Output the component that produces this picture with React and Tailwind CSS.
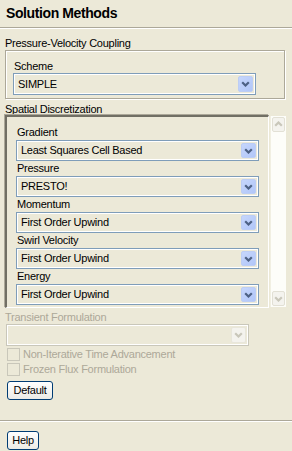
const font = { fontFamily: '"Liberation Sans", Arial, sans-serif', letterSpacing: "-0.25px" };

function Chevron({ color = "#4D6185" }) {
  return (
    <svg width="9" height="6" viewBox="0 0 9 6" className="block">
      <path d="M1.2 1.2 L4.5 4.5 L7.8 1.2" fill="none" stroke={color} strokeWidth="2.2" />
    </svg>
  );
}

function Select({ value, width, height = 21, disabled }) {
  return (
    <div
      className={`flex items-stretch border ${disabled ? "border-[#C9C7BA]" : "border-[#7F9DB9]"} shadow-[inset_0_0_0_1px_#fff]`}
      style={{ width, height }}
    >
      <div className="flex-1 flex items-center pl-[4px] text-[11px] text-black">{value}</div>
      <div className="p-[2px] pl-0">
        <div
          className={`w-[15px] h-full flex items-center justify-center rounded-[2px] border ${
            disabled
              ? "bg-[#F4F3EE] border-[#E8E6DB]"
              : "bg-gradient-to-br from-[#C6D6FC] to-[#B1C6F8] border-[#BCCDF5]"
          }`}
        >
          <Chevron color={disabled ? "#C9C7BA" : "#4D6185"} />
        </div>
      </div>
    </div>
  );
}

function XpButton({ children, width }) {
  return (
    <div
      className="h-[19px] flex items-center justify-center border border-[#003C74] rounded-[3px] bg-gradient-to-b from-white to-[#ECEBE6] text-[11px] text-black"
      style={{ width }}
    >
      {children}
    </div>
  );
}

function Checkbox({ label }) {
  return (
    <div className="flex items-center h-[15px] pl-[7px] gap-[3px]">
      <div className="w-[13px] h-[13px] border border-[#C9C7BA] bg-[#ECE9D8]" />
      <span className="text-[11px] text-[#ACA899]">{label}</span>
    </div>
  );
}

const fields = [
  ["Gradient", "Least Squares Cell Based"],
  ["Pressure", "PRESTO!"],
  ["Momentum", "First Order Upwind"],
  ["Swirl Velocity", "First Order Upwind"],
  ["Energy", "First Order Upwind"],
];

export default function App() {
  return (
    <div className="w-[292px] h-[451px] bg-[#ECE9D8] flex flex-col text-black overflow-hidden" style={font}>
      {/* Title */}
      <div className="h-[27px] flex items-end pb-[3px] pl-[6px] text-[14px] font-bold tracking-[-0.4px]">Solution Methods</div>
      <div className="h-[2px] border-t border-[#ACA899] bg-white" />

      <div className="pl-[5px] flex flex-col">
        {/* Pressure-Velocity Coupling */}
        <div className="h-[21px] pt-[7px] text-[11px] leading-[14px]">Pressure-Velocity Coupling</div>
        <div className="w-[280px] h-[49px] border border-[#ACA899] shadow-[inset_1px_1px_0_#fff,1px_1px_0_#fff] pl-[7px] pt-[8px] flex flex-col">
          <div className="h-[14px] text-[11px] leading-[14px] pl-[1px]">Scheme</div>
          <Select value="SIMPLE" width={243} height={22} />
        </div>

        {/* Spatial Discretization */}
        <div className="h-[16px] pt-[3px] text-[11px] leading-[14px]">Spatial Discretization</div>
        <div className="flex h-[193px]">
          <div className="w-[264px] h-[193px] border-t-2 border-l-2 border-t-[#716F64] border-l-[#716F64] border-b border-r border-b-white border-r-white shadow-[-1px_-1px_0_#ACA899] overflow-hidden pl-[9px] pt-[8px]">
            {fields.map(([label, value]) => (
              <div key={label} className="flex flex-col">
                <div className="h-[15px] text-[11px] leading-[15px] pl-[1px]">{label}</div>
                <Select value={value} width={243} />
              </div>
            ))}
          </div>
          <div className="ml-[1px] mt-[1px] w-[16px] h-[191px] bg-[#FDFDF9] border-l border-[#F1EFE2] flex flex-col justify-between p-[1px]">
            <div className="h-[15px] rounded-[2px] bg-[#F4F3EE] border border-[#E2E0D5] flex items-center justify-center rotate-180">
              <Chevron color="#C9C7BA" />
            </div>
            <div className="h-[15px] rounded-[2px] bg-[#F4F3EE] border border-[#E2E0D5] flex items-center justify-center">
              <Chevron color="#C9C7BA" />
            </div>
          </div>
        </div>

        {/* Transient Formulation */}
        <div className="h-[16px] pt-[2px] text-[11px] leading-[14px] text-[#ACA899]">Transient Formulation</div>
        <div className="pl-[1px]">
          <Select value="" width={243} height={22} disabled />
        </div>
      </div>

      <div className="mt-[1px]">
        <Checkbox label="Non-Iterative Time Advancement" />
        <Checkbox label="Frozen Flux Formulation" />
      </div>

      <div className="pl-[7px] mt-[4px]">
        <XpButton width={46}>Default</XpButton>
      </div>

      <div className="mt-[20px] h-[2px] border-t border-[#ACA899] bg-white" />

      <div className="pl-[7px] mt-[9px]">
        <XpButton width={32}>Help</XpButton>
      </div>
    </div>
  );
}
